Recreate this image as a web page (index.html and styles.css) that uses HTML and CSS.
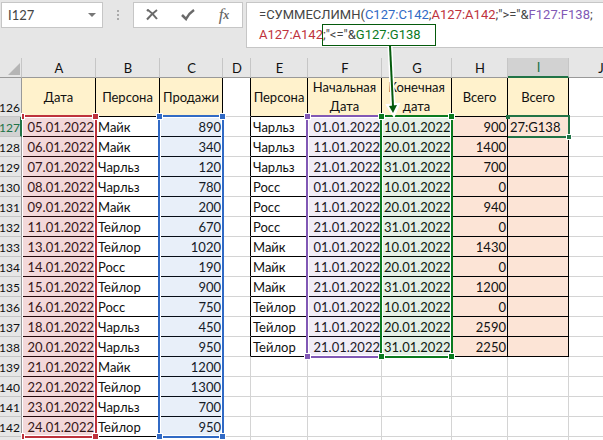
FILE: index.html
```html
<!DOCTYPE html>
<html lang="ru">
<head>
	<meta charset="utf-8">
	<meta name="viewport" content="width=device-width, initial-scale=1">
	<title>СУММЕСЛИМН</title>
	<link rel="stylesheet" href="styles.css">
</head>
<body>
<header class="bar">
	<div class="name-box">
		<input type="text" value="I127" aria-label="Имя ячейки">
		<button type="button" aria-label="Список имён"><svg width="8" height="4" viewBox="0 0 8 4"><path d="M0 0h8L4 4z" fill="#777"/></svg></button>
	</div>
	<div class="grip"><i></i><i></i><i></i></div>
	<div class="tools">
		<button type="button" aria-label="Отмена"><svg width="12" height="12" viewBox="0 0 12 12"><path d="M1 2l1-1c3 2 6 5 9 9M11 1C7 4 4 7 1 10.500" fill="none" stroke="#6a6a6a" stroke-width="2"/></svg></button>
		<button type="button" aria-label="Ввод"><svg width="14" height="12" viewBox="0 0 14 12"><path d="M1 6l4 4C7 6 10 3 13 1" fill="none" stroke="#6a6a6a" stroke-width="2.500"/></svg></button>
		<button type="button" aria-label="Вставить функцию" class="fx"><i>f</i><small>x</small></button>
	</div>
	<div class="formula" role="textbox" aria-label="Строка формул" contenteditable="true" spellcheck="false">=СУММЕСЛИМН(<span class="c-blue">C127:C142</span>;<span class="c-red">A127:A142</span>;"&gt;="&amp;<span class="c-violet">F127:F138</span>;<br><span class="c-red">A127:A142</span><span class="callout">;"&lt;="&amp;<span class="c-green">G127:G138</span><svg class="arrow" width="16" height="72" viewBox="0 0 16 72"><path d="M5 0L8 60" stroke="#fff" stroke-width="5"/><path d="M2 59l12-1-5 12z" fill="#fff" stroke="#fff" stroke-width="2"/><path d="M5 0L8 60" stroke="#045a0c" stroke-width="2"/><path d="M4 60l8-1-4 8z" fill="#045a0c"/></svg></span></div>
</header>

<main class="sheet">
<table>
	<colgroup>
		<col class="w-num"><col class="w-a"><col class="w-b"><col class="w-c"><col class="w-d"><col class="w-e"><col class="w-a"><col class="w-g"><col class="w-h"><col class="w-i"><col class="w-b">
	</colgroup>
	<thead>
		<tr><th class="corner"><svg width="12" height="12" viewBox="0 0 12 12"><path d="M12 0v12H0z" fill="#b5b5b5"/></svg></th><th>A</th><th>B</th><th>C</th><th>D</th><th>E</th><th>F</th><th>G</th><th>H</th><th class="current">I</th><th>J</th></tr>
	</thead>
	<tbody>
		<tr class="titles rec sum"><th>126</th><td>Дата</td><td>Персона</td><td>Продажи</td><td></td><td>Персона</td><td>Начальная Дата</td><td>Конечная дата</td><td>Всего</td><td>Всего</td><td></td></tr>
		<tr class="rec sum">
			<th class="current">127</th>
			<td>05.01.2022<div class="range red rows-16"><b></b><b></b><b></b><b></b></div></td>
			<td>Майк</td>
			<td>890<div class="range blue rows-16"><b></b><b></b><b></b><b></b></div></td>
			<td></td>
			<td>Чарльз</td>
			<td>01.01.2022<div class="range violet rows-12"><b></b><b></b><b></b><b></b></div></td>
			<td>10.01.2022<div class="range green rows-12"><b></b><b></b><b></b><b></b></div></td>
			<td>900</td>
			<td>27:G138<div class="cursor"></div></td>
			<td></td>
		</tr>
		<tr class="rec sum"><th>128</th><td>06.01.2022</td><td>Майк</td><td>340</td><td></td><td>Чарльз</td><td>11.01.2022</td><td>20.01.2022</td><td>1400</td><td></td><td></td></tr>
		<tr class="rec sum"><th>129</th><td>07.01.2022</td><td>Чарльз</td><td>120</td><td></td><td>Чарльз</td><td>21.01.2022</td><td>31.01.2022</td><td>700</td><td></td><td></td></tr>
		<tr class="rec sum"><th>130</th><td>08.01.2022</td><td>Чарльз</td><td>780</td><td></td><td>Росс</td><td>01.01.2022</td><td>10.01.2022</td><td>0</td><td></td><td></td></tr>
		<tr class="rec sum"><th>131</th><td>09.01.2022</td><td>Майк</td><td>200</td><td></td><td>Росс</td><td>11.01.2022</td><td>20.01.2022</td><td>940</td><td></td><td></td></tr>
		<tr class="rec sum"><th>132</th><td>11.01.2022</td><td>Тейлор</td><td>670</td><td></td><td>Росс</td><td>21.01.2022</td><td>31.01.2022</td><td>0</td><td></td><td></td></tr>
		<tr class="rec sum"><th>133</th><td>13.01.2022</td><td>Тейлор</td><td>1020</td><td></td><td>Майк</td><td>01.01.2022</td><td>10.01.2022</td><td>1430</td><td></td><td></td></tr>
		<tr class="rec sum"><th>134</th><td>14.01.2022</td><td>Росс</td><td>190</td><td></td><td>Майк</td><td>11.01.2022</td><td>20.01.2022</td><td>0</td><td></td><td></td></tr>
		<tr class="rec sum"><th>135</th><td>15.01.2022</td><td>Тейлор</td><td>900</td><td></td><td>Майк</td><td>21.01.2022</td><td>31.01.2022</td><td>1200</td><td></td><td></td></tr>
		<tr class="rec sum"><th>136</th><td>16.01.2022</td><td>Росс</td><td>750</td><td></td><td>Тейлор</td><td>01.01.2022</td><td>10.01.2022</td><td>0</td><td></td><td></td></tr>
		<tr class="rec sum"><th>137</th><td>18.01.2022</td><td>Чарльз</td><td>450</td><td></td><td>Тейлор</td><td>11.01.2022</td><td>20.01.2022</td><td>2590</td><td></td><td></td></tr>
		<tr class="rec sum"><th>138</th><td>20.01.2022</td><td>Чарльз</td><td>950</td><td></td><td>Тейлор</td><td>21.01.2022</td><td>31.01.2022</td><td>2250</td><td></td><td></td></tr>
		<tr class="rec"><th>139</th><td>21.01.2022</td><td>Майк</td><td>1200</td><td></td><td></td><td></td><td></td><td></td><td></td><td></td></tr>
		<tr class="rec"><th>140</th><td>22.01.2022</td><td>Тейлор</td><td>1300</td><td></td><td></td><td></td><td></td><td></td><td></td><td></td></tr>
		<tr class="rec"><th>141</th><td>23.01.2022</td><td>Чарльз</td><td>700</td><td></td><td></td><td></td><td></td><td></td><td></td><td></td></tr>
		<tr class="rec"><th>142</th><td>24.01.2022</td><td>Тейлор</td><td>950</td><td></td><td></td><td></td><td></td><td></td><td></td><td></td></tr>
		<tr><th></th><td></td><td></td><td></td><td></td><td></td><td></td><td></td><td></td><td></td><td></td></tr>
	</tbody>
</table>
</main>
</body>
</html>
```
FILE: styles.css
```css
:root
{
	--row: 20px;
	--chrome: #e6e6e6;
	--line: #c6c6c6;
	--grid: #d4d4d4;
	--excel: #217346;
	--blue: #316ac5;
	--red: #be323c;
	--violet: #8158b5;
	--green: #0a7a1e;
}

*
{
	box-sizing: border-box;
}

body
{
	display: flex;
	flex-direction: column;
	height: 100vh;
	margin: 0;
	overflow: hidden;
	background: #fff;
	color: #111;
	font-family: Lato, "Noto Sans", sans-serif;
	font-size: 13px;
}

button,
input
{
	padding: 0;
	border: 0;
	background: none;
	color: inherit;
	font: inherit;
}

button
{
	display: flex;
	align-items: center;
	justify-content: center;
}

/* formula bar */

.bar
{
	display: flex;
	flex: none;
	align-items: flex-start;
	padding: 2px 0 10px 1px;
	background: var(--chrome);
	color: #444;
}

.name-box,
.tools,
.formula
{
	border: 1px solid var(--line);
	background: #fff;
}

.name-box
{
	display: flex;
	flex: none;
	width: 102px;
	height: 26px;
}

.name-box input
{
	flex: 1;
	min-width: 0;
	padding-left: 6px;
}

.name-box button
{
	width: 20px;
}

.grip
{
	display: flex;
	flex: none;
	flex-direction: column;
	gap: 2px;
	width: 30px;
	align-items: center;
	padding-top: 8px;
}

.grip i
{
	width: 2px;
	height: 2px;
	background: #aaa;
}

.tools
{
	display: flex;
	flex: none;
	width: 110px;
	height: 26px;
}

.tools button
{
	flex: 1;
}

.fx
{
	color: #666;
	font-family: "Liberation Serif", serif;
	font-size: 17px;
}

.fx small
{
	font-size: 12px;
	font-style: italic;
	font-weight: bold;
}

.formula
{
	flex: 1;
	min-width: 0;
	height: 46px;
	padding: 2px 0 0 12px;
	margin-left: 3px;
	border-right: 0;
	font-family: Roboto, "Noto Sans", sans-serif;
	line-height: 20px;
	white-space: nowrap;
	outline: 0;
}

.c-blue { color: var(--blue); }
.c-red { color: var(--red); }
.c-violet { color: var(--violet); }
.c-green { color: var(--green); }

.callout
{
	position: relative;
	display: inline-block;
	height: 20px;
	padding-right: 14px;
	outline: 1px solid #045a0c;
}

.arrow
{
	position: absolute;
	z-index: 3;
	top: 21px;
	left: 62px;
}

/* sheet */

.sheet
{
	flex: 1;
	overflow: hidden;
}

table
{
	width: 633px;
	border-collapse: separate;
	border-spacing: 0;
	table-layout: fixed;
}

.w-num { width: 22px; }
.w-a { width: 74px; }
.w-b { width: 64px; }
.w-c { width: 63px; }
.w-d { width: 28px; }
.w-e { width: 57px; }
.w-g { width: 70px; }
.w-h { width: 56px; }
.w-i { width: 61px; }

th,
td
{
	position: relative;
	height: var(--row);
	padding: 2px 1px 0 2px;
	border-right: 1px solid var(--grid);
	border-bottom: 1px solid var(--grid);
	font-weight: normal;
	line-height: 17px;
	white-space: nowrap;
}

th
{
	background: var(--chrome);
	border-color: var(--line);
}

thead th
{
	padding-top: 0;
	border-bottom-color: #999;
	line-height: 18px;
}

thead .current
{
	border-bottom: 2px solid var(--excel);
	background: #d2d2d2;
	color: var(--excel);
}

.corner
{
	padding-top: 3px;
	line-height: 0;
	text-align: right;
}

tbody th
{
	padding: 2px 0 0;
	border-right-color: #999;
	font-size: 12px;
	text-align: left;
	text-indent: -1px;
}

tbody .current
{
	border-right: 2px solid var(--excel);
	background: #d2d2d2;
	color: var(--excel);
}

.rec td:nth-child(n+2):nth-child(-n+4),
.sum td:nth-child(n+6):nth-child(-n+10)
{
	border-color: #000;
}

.sum td:nth-child(5)
{
	border-right-color: #000;
}

td:nth-child(2),
td:nth-child(4),
td:nth-child(7),
td:nth-child(8),
td:nth-child(9)
{
	text-align: right;
}

.sum td:nth-child(9),
.sum td:nth-child(10)
{
	background: #fce4d6;
}

.titles th
{
	vertical-align: bottom;
}

.titles td
{
	height: 39px;
	padding: 0;
	line-height: 19px;
	text-align: center;
	white-space: normal;
}

.titles td:not(:nth-child(5)):not(:nth-child(11))
{
	background: #fff2cc;
}

/* coloured outlines of the ranges used in the formula */

.range
{
	position: absolute;
	z-index: 1;
	top: -2px;
	left: -2px;
	width: calc(100% + 4px);
	height: calc(var(--row) * var(--rows) + 3px);
	border: 2px solid var(--tone);
	background: var(--fill);
	box-shadow: inset 0 0 0 1px #fff;
}

.rows-12 { --rows: 12; }
.rows-16 { --rows: 16; }

.red
{
	left: 0;
	width: calc(100% + 2px);
	border-left: 0;

	--tone: var(--red);
	--fill: rgb(190 50 60 / 19%);
}

.blue
{
	--tone: var(--blue);
	--fill: rgb(49 106 197 / 11%);
}

.violet
{
	--tone: var(--violet);
	--fill: rgb(129 88 181 / 11%);
}

.green
{
	--tone: var(--green);
	--fill: rgb(10 122 30 / 11%);
}

.range b
{
	position: absolute;
	width: 5px;
	height: 5px;
	background: var(--tone);
	outline: 1px solid #fff;
}

.range b:nth-child(1) { top: -3px; left: -3px; }
.range b:nth-child(2) { top: -3px; right: -3px; }
.range b:nth-child(3) { bottom: -3px; left: -3px; }
.range b:nth-child(4) { right: -3px; bottom: -3px; }

.red b:nth-child(odd)
{
	left: 0;
	width: 2px;
}

/* cell being edited */

.cursor
{
	position: absolute;
	z-index: 2;
	top: -2px;
	left: 0;
	width: calc(100% + 2px);
	height: calc(var(--row) + 3px);
	border: 2px solid var(--excel);
	border-left: 0;
}

.cursor::before,
.cursor::after
{
	position: absolute;
	width: 4px;
	height: 4px;
	background: var(--excel);
	content: "";
}

.cursor::before
{
	top: -2px;
	left: -2px;
}

.cursor::after
{
	right: -3px;
	bottom: -3px;
	outline: 1px solid #fff;
}
```
